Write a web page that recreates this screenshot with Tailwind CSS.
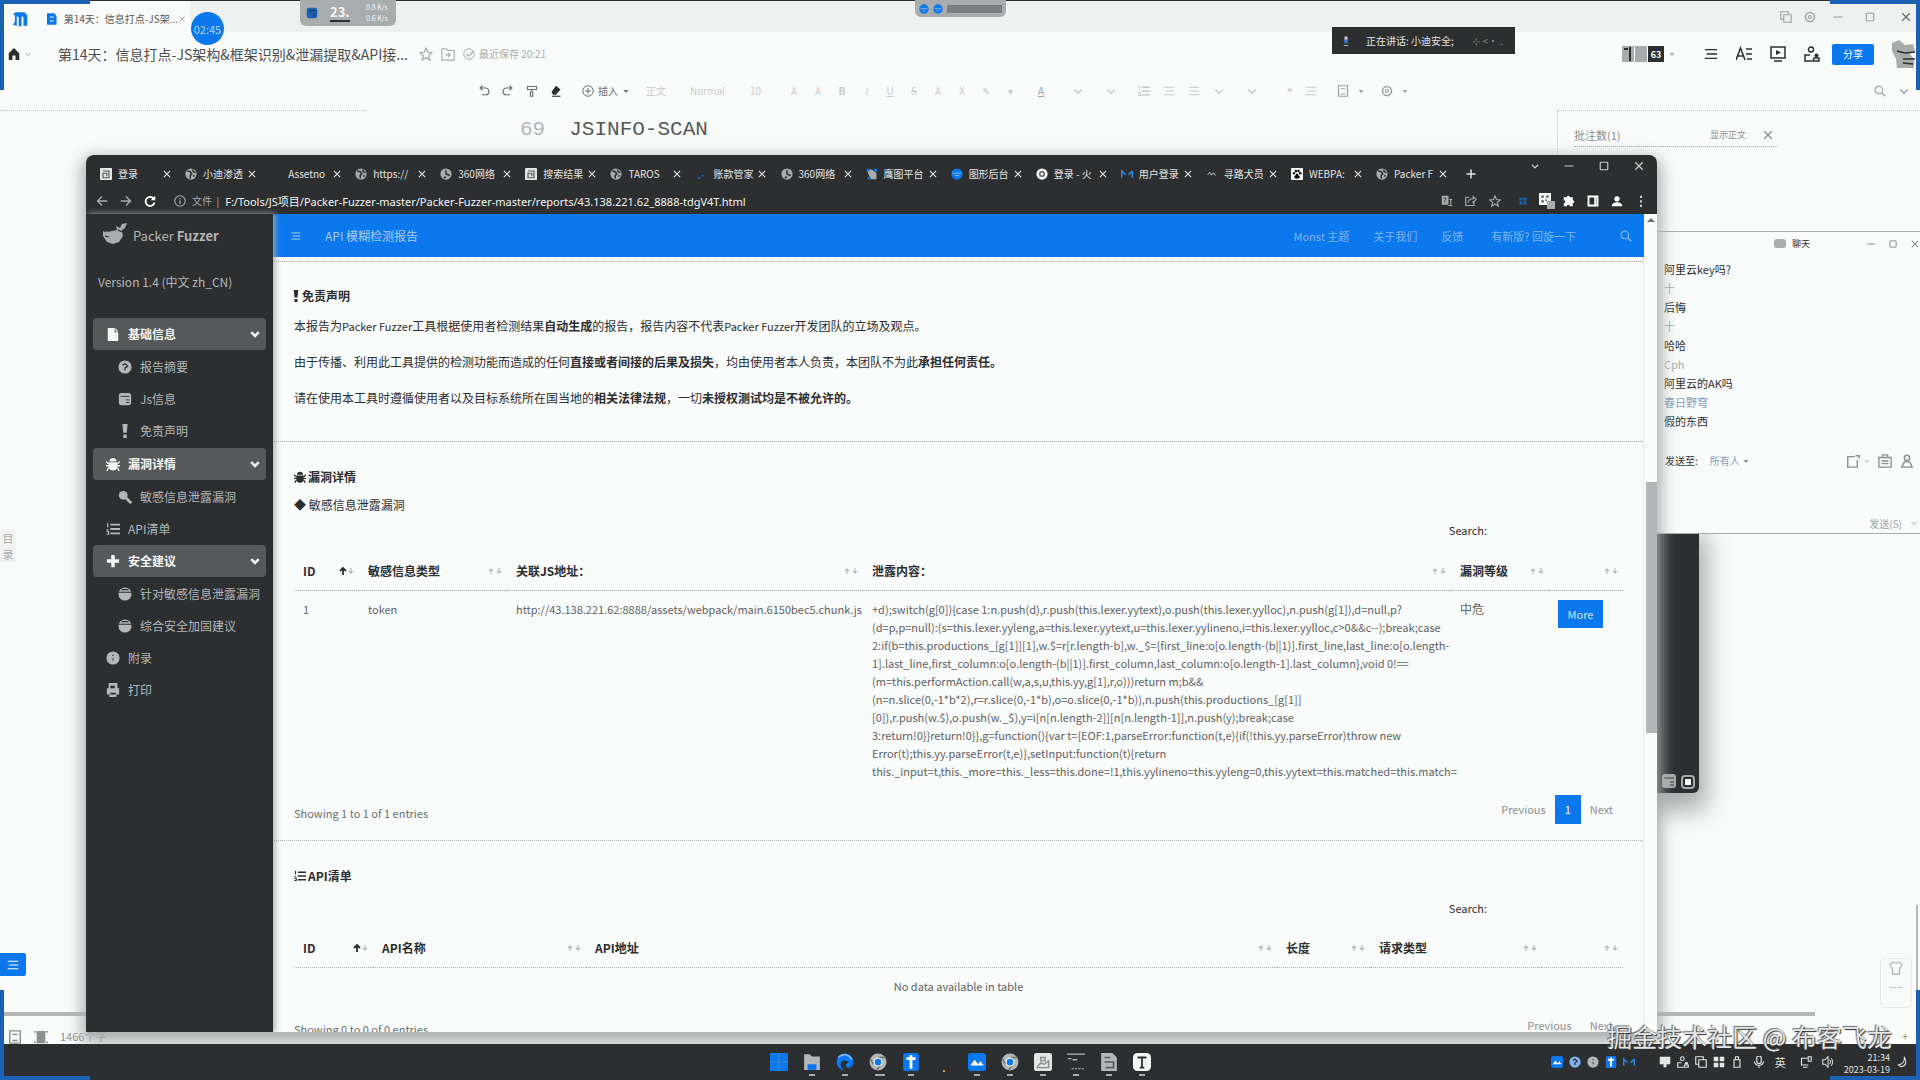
<!DOCTYPE html>
<html lang="zh-CN">
<head>
  <meta charset="UTF-8" />
  <meta name="viewport" content="width=device-width, initial-scale=1.0"/>
  <title>Packer Fuzzer 报告</title>
  <script src="https://cdn.jsdelivr.net/npm/@tailwindcss/browser@4"></script>
</head>
<body class="h-screen overflow-hidden bg-[#fafbfb] font-['Noto_Sans_CJK_SC',sans-serif] text-xs leading-[18px] text-[#2c2e2f]">

  <!-- Icon sprite -->
  <svg class="hidden">
    <symbol id="x" viewBox="0 0 16 16"><path d="M3 3l10 10M13 3L3 13" fill="none" stroke="currentColor" stroke-width="1.8"/></symbol>
    <symbol id="min" viewBox="0 0 16 16"><path d="M2 8h12" stroke="currentColor" stroke-width="1.6"/></symbol>
    <symbol id="max" viewBox="0 0 16 16"><rect x="3" y="3" width="10" height="10" rx="1" fill="none" stroke="currentColor" stroke-width="1.6"/></symbol>
    <symbol id="down" viewBox="0 0 16 16"><path d="M3 6l5 5 5-5" fill="none" stroke="currentColor" stroke-width="2"/></symbol>
    <symbol id="caret" viewBox="0 0 16 16"><path d="M3 6h10l-5 6z" fill="currentColor"/></symbol>
    <symbol id="chev" viewBox="0 0 16 16"><path d="M2 5l6 6 6-6" fill="none" stroke="currentColor" stroke-width="4"/></symbol>
    <symbol id="plus" viewBox="0 0 16 16"><path d="M8 2v12M2 8h12" stroke="currentColor" stroke-width="2"/></symbol>
    <symbol id="plusbold" viewBox="0 0 16 16"><path d="M8 1v14M1 8h14" stroke="currentColor" stroke-width="4"/></symbol>
    <symbol id="home" viewBox="0 0 16 16"><path d="M8 0L1 7v9h5v-6h4v6h5V7z" fill="currentColor"/></symbol>
    <symbol id="globe" viewBox="0 0 16 16"><circle cx="8" cy="8" r="7.5" fill="#a9acac"/><path d="M3 4l4 1 2 3-2 2v4M10 2l1 3 3 1M11 10l2 1" fill="none" stroke="#2c2e2f" stroke-width="2"/></symbol>
    <symbol id="clock" viewBox="0 0 16 16"><circle cx="8" cy="8" r="7.5" fill="#a9acac"/><path d="M8 3v5l5 2M8 12l-3 1" fill="none" stroke="#2c2e2f" stroke-width="2"/></symbol>
    <symbol id="paw" viewBox="0 0 16 16"><rect width="16" height="16" rx="1" fill="#f4f5f5"/><circle cx="4" cy="7" r="1.6"/><circle cx="6.5" cy="4" r="1.6"/><circle cx="10" cy="4" r="1.6"/><circle cx="12.5" cy="7" r="1.6"/><path d="M8 7l4 5-2 2H6l-2-2z"/></symbol>
    <symbol id="tile" viewBox="0 0 16 16"><rect width="16" height="16" rx="1" fill="#e4e5e5"/><path d="M4 4h8v9H4V7h5v4" fill="none" stroke="#55595a" stroke-width="1.6"/></symbol>
    <symbol id="ring" viewBox="0 0 16 16"><circle cx="8" cy="8" r="7.5" fill="#f4f5f5"/><circle cx="8" cy="8" r="3" fill="none" stroke="#55595a" stroke-width="1.8"/></symbol>
    <symbol id="gear" viewBox="0 0 16 16"><circle cx="8" cy="8" r="6" fill="none" stroke="currentColor" stroke-width="2"/><circle cx="8" cy="8" r="2" fill="none" stroke="currentColor" stroke-width="1.6"/></symbol>
    <symbol id="eagle" viewBox="0 0 16 16"><path d="M1 2h7l6 5v8H7l-3-5z" fill="#a9acac"/><path d="M1 1h4v3H1zM11 1h4v4h-4zM2 12h4v3H2z" fill="#0b78ee"/></symbol>
    <symbol id="orb" viewBox="0 0 16 16"><circle cx="8" cy="8" r="7.5" fill="#0b78ee"/><path d="M2 7h12M5 10h6" stroke="#7fb3ea" stroke-width="1.5"/></symbol>
    <symbol id="zig" viewBox="0 0 16 16"><path d="M1 13V4l5 5M15 4v9M10 9l5-5" fill="none" stroke="#2f86e6" stroke-width="2"/></symbol>
    <symbol id="tick3" viewBox="0 0 16 16"><path d="M2 9l3-3 2 3 3-2 3 3" fill="none" stroke="#a9acac" stroke-width="1.4"/></symbol>
    <symbol id="spark" viewBox="0 0 16 16"><path d="M4 12h3v2H4zM9 9h2v2H9z" fill="#0b78ee"/></symbol>
    <symbol id="back" viewBox="0 0 16 16"><path d="M15 8H2M8 2L2 8l6 6" fill="none" stroke="currentColor" stroke-width="1.8"/></symbol>
    <symbol id="fwd" viewBox="0 0 16 16"><path d="M1 8h13M8 2l6 6-6 6" fill="none" stroke="currentColor" stroke-width="1.8"/></symbol>
    <symbol id="reload" viewBox="0 0 16 16"><path d="M13 5a6 6 0 1 0 1 5" fill="none" stroke="currentColor" stroke-width="2.4"/><path d="M15 1v6H9z" fill="currentColor"/></symbol>
    <symbol id="info" viewBox="0 0 16 16"><circle cx="8" cy="8" r="7" fill="none" stroke="currentColor" stroke-width="1.5"/><path d="M8 7v5M8 4v1.5" stroke="currentColor" stroke-width="1.8"/></symbol>
    <symbol id="star" viewBox="0 0 16 16"><path d="M8 1l2 5 5 .5-4 3.5 1.5 5L8 12l-4.500 3L5 10 1 6.500 6 6z" fill="none" stroke="currentColor" stroke-width="1.4"/></symbol>
    <symbol id="folder" viewBox="0 0 16 16"><path d="M1 2h5l2 2h7v11H1zM5 9h5M8 6.500L10.500 9 8 11.500" fill="none" stroke="currentColor" stroke-width="1.3"/></symbol>
    <symbol id="check" viewBox="0 0 16 16"><circle cx="8" cy="8" r="7" fill="none" stroke="currentColor" stroke-width="1.3"/><path d="M4.500 8l3 3L14 4" fill="none" stroke="currentColor" stroke-width="1.5"/></symbol>
    <symbol id="undo" viewBox="0 0 16 16"><path d="M3 4h7a4 4 0 0 1 0 9H5M6 1L3 4l3 3" fill="none" stroke="currentColor" stroke-width="1.6"/></symbol>
    <symbol id="redo" viewBox="0 0 16 16"><path d="M13 4H6a4 4 0 0 0 0 9h5M10 1l3 3-3 3" fill="none" stroke="currentColor" stroke-width="1.6"/></symbol>
    <symbol id="brush" viewBox="0 0 16 16"><path d="M2 2h12v4H2zM8 6v3H6v6h3V9" fill="none" stroke="currentColor" stroke-width="1.5"/></symbol>
    <symbol id="eraser" viewBox="0 0 16 16"><path d="M8 1l6 5-6 7H4l-2-4z" fill="currentColor"/><path d="M3 15h11" stroke="currentColor" stroke-width="1.5"/></symbol>
    <symbol id="addc" viewBox="0 0 16 16"><circle cx="8" cy="8" r="7" fill="none" stroke="currentColor" stroke-width="1.3"/><path d="M8 4v8M4 8h8" stroke="currentColor" stroke-width="1.3"/></symbol>
    <symbol id="lines" viewBox="0 0 16 16"><path d="M1 3h14M3 8h12M1 13h14" stroke="currentColor" stroke-width="1.6"/></symbol>
    <symbol id="ol" viewBox="0 0 16 16"><path d="M5 3h11M5 8h11M5 13h11" stroke="currentColor" stroke-width="2.2"/><path d="M2 1v5M.5 9h2.500M.5 14h2.500v-3H.5" stroke="currentColor" fill="none" stroke-width="1.4"/></symbol>
    <symbol id="box" viewBox="0 0 16 16"><path d="M2 1h12v14H2zM5 5h6M5 12h6" fill="none" stroke="currentColor" stroke-width="1.6"/></symbol>
    <symbol id="clip" viewBox="0 0 16 16"><path d="M1 4h14v11H1zM5 4V1h6v3M4 8h8M4 11h8" fill="none" stroke="currentColor" stroke-width="1.5"/></symbol>
    <symbol id="shot" viewBox="0 0 16 16"><path d="M10 3H2v12h11V7M11 2h4v3" fill="none" stroke="currentColor" stroke-width="1.6"/></symbol>
    <symbol id="user" viewBox="0 0 16 16"><circle cx="8" cy="4.500" r="3" fill="none" stroke="currentColor" stroke-width="1.6"/><path d="M2 15l3-6h6l3 6z" fill="none" stroke="currentColor" stroke-width="1.6"/></symbol>
    <symbol id="magnify" viewBox="0 0 16 16"><circle cx="6.500" cy="6.500" r="5" fill="none" stroke="currentColor" stroke-width="1.6"/><path d="M10 10l5 5" stroke="currentColor" stroke-width="2"/></symbol>
    <symbol id="aa" viewBox="0 0 16 16"><path d="M0 14L4.500 2 9 14M2 10h5M10 3h6M10 8h6M11 13h5" fill="none" stroke="currentColor" stroke-width="1.5"/></symbol>
    <symbol id="play" viewBox="0 0 16 16"><path d="M1 1h14v11H1zM4 15h8" fill="none" stroke="currentColor" stroke-width="1.5"/><path d="M6 4l5 2.500L6 9z" fill="currentColor"/></symbol>
    <symbol id="people" viewBox="0 0 16 16"><circle cx="7" cy="3.500" r="2.500" fill="none" stroke="currentColor" stroke-width="1.4"/><path d="M6 9H1v6h7M9 15h6v-3h-5z" fill="none" stroke="currentColor" stroke-width="1.5"/><circle cx="12.500" cy="9.500" r="2" fill="currentColor"/></symbol>
    <symbol id="avatar" viewBox="0 0 24 28"><path d="M1 3l7-3 6 5 8-1 2 7-5 3 4 5v9H10L6 28l-1-9-4-8z" fill="#a9acac"/><path d="M6 11l8 2 10-1M12 19h12M12 23l10 1" stroke="#2c2e2f" stroke-width="1.5" fill="none"/></symbol>
    <symbol id="translate" viewBox="0 0 16 16"><rect x="1" y="1" width="9" height="12" fill="currentColor"/><path d="M11 6h4M13 6v8M10 14h5" stroke="currentColor" stroke-width="1.5"/><path d="M3 4h4l-3 6" stroke="#2c2e2f" fill="none"/></symbol>
    <symbol id="share" viewBox="0 0 16 16"><path d="M6 3H1v11h11v-4M4 10c1-4 4-5 7-5V2l4 4-4 4V8" fill="none" stroke="currentColor" stroke-width="1.5"/></symbol>
    <symbol id="puzzle" viewBox="0 0 16 16"><path d="M1 3h4a2 2 0 1 1 4 0h4v4a2 2 0 1 1 0 4v4H9a2 2 0 0 0-4 0H1v-4a2 2 0 0 0 0-4z" fill="currentColor"/></symbol>
    <symbol id="side" viewBox="0 0 16 16"><path d="M2 2h12v12H2zM11 2v12" fill="none" stroke="currentColor" stroke-width="2.5"/></symbol>
    <symbol id="person" viewBox="0 0 16 16"><circle cx="8" cy="5" r="3.500" fill="currentColor"/><path d="M1 15c0-7 14-7 14 0z" fill="currentColor"/></symbol>
    <symbol id="dots" viewBox="0 0 16 16"><path d="M7 1h2v3H7zM7 7h2v3H7zM7 13h2v3H7z" fill="currentColor"/></symbol>
    <symbol id="qr" viewBox="0 0 20 20"><path d="M0 0h15v15H0z" fill="#f4f5f5"/><path d="M3 3h3v3H3zM9 3h3v3H9zM3 9h3v3H3zM8 8h2v2H8z" fill="#55595a"/><path d="M10 10h10v10H10z" fill="#a9acac"/></symbol>
    <symbol id="file" viewBox="0 0 16 16"><path d="M2 1h8v5h4v10H2z" fill="currentColor"/><path d="M11 1l3 4h-3z" fill="currentColor"/></symbol>
    <symbol id="shield" viewBox="0 0 16 16"><circle cx="8" cy="8" r="7.5" fill="currentColor"/><path d="M5 6l3-2 3 3-3 2v3" fill="none" stroke="#2c2e2f" stroke-width="1.5"/></symbol>
    <symbol id="db" viewBox="0 0 16 16"><rect x="1" y="1" width="14" height="14" rx="3" fill="currentColor"/><path d="M3 5h10M9 9h4M9 12h4" stroke="#2c2e2f"/></symbol>
    <symbol id="excl" viewBox="0 0 16 16"><path d="M5 0h6l-1 10H6zM6 12h4v4H6z" fill="currentColor"/></symbol>
    <symbol id="bug" viewBox="0 0 16 16"><path d="M4 5a4 4 0 0 1 8 0z" fill="currentColor"/><path d="M3 6h10v5a5 4.500 0 0 1-10 0z" fill="currentColor"/><path d="M3 8L0 5M13 8l3-3M0 10h16M3 12l-2 4M13 12l2 4" stroke="currentColor" stroke-width="1.6"/></symbol>
    <symbol id="ball" viewBox="0 0 16 16"><circle cx="8" cy="8" r="7.5" fill="currentColor"/><path d="M1 6h14M4 3h8" stroke="#2c2e2f" stroke-width="1.2"/></symbol>
    <symbol id="key" viewBox="0 0 16 16"><circle cx="6" cy="6" r="5" fill="currentColor"/><path d="M8 8l7 7" stroke="currentColor" stroke-width="3.2"/></symbol>
    <symbol id="disc" viewBox="0 0 16 16"><circle cx="8" cy="8" r="7.5" fill="currentColor"/><path d="M7 5h2M8 8v3" stroke="#2c2e2f"/></symbol>
    <symbol id="print" viewBox="0 0 16 16"><path d="M3 0h10v6h2v7h-3v3H4v-3H1V6h2z" fill="currentColor"/><path d="M5 3h5v3H5zM5 11h6v2H5z" fill="#2c2e2f"/></symbol>
    <symbol id="sort" viewBox="0 0 16 10"><path d="M4 8V3M2 5l2-2 2 2M12 2v5M10 5l2 2 2-2" fill="none" stroke="#b4b7b7" stroke-width="1.1"/></symbol>
    <symbol id="sortup" viewBox="0 0 16 10"><path d="M4 9V2M1 5l3-3 3 3" fill="none" stroke="#2c2e2f" stroke-width="1.8"/><path d="M12 2v5M10 5l2 2 2-2" fill="none" stroke="#b4b7b7" stroke-width="1.1"/></symbol>
    <symbol id="chrome" viewBox="0 0 16 16"><circle cx="8" cy="8" r="7.5" fill="#b4b7b7"/><path d="M8 4h7M4 10L1 5M10 11l-3 4" stroke="#6b6f70" stroke-width="1.2"/><circle cx="8" cy="8" r="3.500" fill="#0b78ee" stroke="#f4f5f5"/></symbol>
    <symbol id="edge" viewBox="0 0 16 16"><circle cx="8" cy="8" r="7.5" fill="#0b78ee"/><path d="M5 13c-3-6 3-8 6-5 0 2-3 1-2 4 1 2 4 1 5 0l-2 4H8z" fill="#2c2e2f"/><path d="M2 4c4-4 10-3 12 2" stroke="#7fb3ea" fill="none" stroke-width="1.5"/></symbol>
    <symbol id="explorer" viewBox="0 0 16 16"><path d="M1 1h5l2 2h7v12H1z" fill="#b4b7b7"/><path d="M4 10h8v5H4z" fill="#0b78ee"/></symbol>
    <symbol id="tdoc" viewBox="0 0 16 16"><rect x="1" width="14" height="16" rx="2" fill="#0b78ee"/><path d="M4 5h8M8 2v12" stroke="#fff" stroke-width="2.500"/></symbol>
    <symbol id="wave" viewBox="0 0 16 16"><rect width="16" height="16" rx="3" fill="#0b78ee"/><path d="M2 11l4-5 3 4 2-3 3 4z" fill="#fff"/></symbol>
    <symbol id="note" viewBox="0 0 16 16"><rect width="16" height="16" rx="2" fill="#e4e5e5"/><path d="M3 12l3-3 3 1 4-3v6H3zM6 4h4v3H6z" stroke="#8b8f8f" fill="none" stroke-width="1.3"/></symbol>
    <symbol id="term" viewBox="0 0 16 16"><path d="M0 1h16M1 5h3M5 6h4" stroke="#b4b7b7" stroke-width="1.2"/><path d="M4 14h12" stroke="#b4b7b7" stroke-dasharray="2 1"/></symbol>
    <symbol id="paper" viewBox="0 0 16 16"><path d="M1 0h10l4 4v12H1z" fill="#b4b7b7"/><path d="M4 4h5M4 8h8v5H5" stroke="#55595a" fill="none" stroke-width="1.5"/></symbol>
    <symbol id="tapp" viewBox="0 0 16 16"><rect width="16" height="16" rx="4" fill="#f4f5f5"/><path d="M4 4h8M8 4v9M6 13h4" stroke="#2c2e2f" stroke-width="1.6"/></symbol>
    <symbol id="mic" viewBox="0 0 16 16"><rect x="5" y="0" width="6" height="10" rx="3" fill="none" stroke="currentColor" stroke-width="1.6"/><path d="M2 7c0 7 12 7 12 0M8 12v4" fill="none" stroke="currentColor" stroke-width="1.4"/></symbol>
    <symbol id="micon" viewBox="0 0 16 16"><path d="M6 2h4v5H6z" fill="#c8caca"/><path d="M6 6h4v5H6z" fill="#2f86e6"/><path d="M5 14h6" stroke="#a9acac" stroke-width="1.5"/></symbol>
    <symbol id="spk" viewBox="0 0 16 16"><path d="M1 5h3l4-4v14l-4-4H1zM10 5c2 2 2 4 0 6M12 3c3 3 3 7 0 10" fill="none" stroke="currentColor" stroke-width="1.4"/></symbol>
    <symbol id="mon" viewBox="0 0 16 16"><path d="M1 1h14v10H1zM6 11h4v4H6z" fill="currentColor"/></symbol>
    <symbol id="net" viewBox="0 0 16 16"><path d="M11 12H2V3h8M11 1h4v6h-4zM4 15h6" fill="none" stroke="currentColor" stroke-width="1.500"/></symbol>
    <symbol id="win" viewBox="0 0 16 16"><path d="M1 1h6v6H1zM9 1h6v6H9zM1 9h6v6H1zM9 9h6v6H9z" fill="currentColor"/></symbol>
    <symbol id="winlogo" viewBox="0 0 16 16"><path d="M0 0h16v16H0z" fill="#0b78ee"/><path d="M8 0v16M0 8h16" stroke="#3f86cf" stroke-width="1"/></symbol>
    <symbol id="bricks" viewBox="0 0 16 16"><path d="M3 1h10v14H3zM0 1h2v2H0zM14 1h2v2h-2zM0 13h2v2H0zM14 13h2v2h-2z" fill="currentColor"/></symbol>
    <symbol id="copy" viewBox="0 0 16 16"><path d="M5 5h10v10H5zM5 11H1V1h10v4" fill="none" stroke="currentColor" stroke-width="1.5"/></symbol>
    <symbol id="usb" viewBox="0 0 16 16"><path d="M6 1h4v4H6zM4 5h8v10H4z" fill="none" stroke="currentColor" stroke-width="1.5"/></symbol>
    <symbol id="moon" viewBox="0 0 16 16"><path d="M11 1c1 6-2 10-8 11 4 4 10 2 10-4 0-3-1-5-2-7z" fill="none" stroke="currentColor" stroke-width="1.4"/></symbol>
    <symbol id="shirt" viewBox="0 0 16 16"><path d="M5 1L1 4l2 4h1v7h8V8h1l2-4-4-3c-1 2-5 2-6 0z" fill="none" stroke="currentColor" stroke-width="1.2"/></symbol>
    <symbol id="dog" viewBox="0 0 26 22"><path d="M2 8c3 2 6 2 9 1l5-1 5 1 1 5-4 6-6 2-6-2-4-6z" fill="#a9acac"/><path d="M15 4l4 2 2-4 5-1-2 5-4 3-4-1z" fill="#a9acac"/><path d="M0 7l5 3M4 14l4 1M17 8l4 2" stroke="#2c2e2f" stroke-width="1.200"/></symbol>
  </svg>

  <div class="flex h-full flex-col">
    <main class="relative flex min-h-0 flex-1 flex-col">

      <!-- Document app: title bar -->
      <div class="flex h-8 shrink-0 items-center border-t border-[#2c2e2f] bg-[#eff0f0] text-[#a0a3a3]">
        <div class="flex h-full w-[190px] items-center bg-[#fafbfb] pl-3 pt-1">
          <svg class="mr-[18px] h-4 w-[17px]" viewBox="0 0 17 16"><path d="M1 3l3-2h9l3 3v11h-4V6l-2-1v10l-3 1V6L5 5v10l-4-1 2-3V4z" fill="#0b78ee"/></svg>
          <svg class="mr-1.5 size-3" viewBox="0 0 12 12"><path d="M1 0h8l2 3v9H1z" fill="#0b78ee"/><path d="M4 4h4M4 8h4" stroke="#fff"/></svg>
          <span class="flex-1 whitespace-nowrap text-[10px] text-[#55595a]">第14天：信息打点-JS架...</span>
          <button class="mr-1" aria-label="关闭标签"><svg class="size-2"><use href="#x"/></svg></button>
        </div>
        <div class="ml-auto flex items-center gap-3 pr-2">
          <svg class="size-3"><use href="#copy"/></svg>
          <svg class="size-3"><use href="#gear"/></svg>
          <button aria-label="最小化" class="ml-1"><svg class="size-3"><use href="#min"/></svg></button>
          <button aria-label="最大化" class="ml-2"><svg class="size-3"><use href="#max"/></svg></button>
          <button aria-label="关闭" class="ml-3 text-[#6b6f70]"><svg class="size-3"><use href="#x"/></svg></button>
        </div>
      </div>

      <!-- Document name and actions -->
      <div class="flex h-11 shrink-0 items-center pl-2">
        <svg class="size-3"><use href="#home"/></svg>
        <svg class="ml-1 size-2 text-[#a9acac]"><use href="#down"/></svg>
        <h1 class="ml-[26px] w-[345px] whitespace-nowrap text-sm text-[#4b4e4f]">第14天：信息打点-JS架构&amp;框架识别&amp;泄漏提取&amp;API接...</h1>
        <div class="ml-4 flex items-center gap-2 text-[10px] text-[#a9acac]">
          <svg class="size-3.5"><use href="#star"/></svg>
          <svg class="size-3.5"><use href="#folder"/></svg>
          <svg class="size-3"><use href="#check"/></svg>
          <span class="-ml-1">最近保存 20:21</span>
        </div>
        <div class="ml-auto flex items-center">
          <div class="flex h-4 items-center gap-px text-[9px] font-bold leading-none text-white">
            <svg class="size-3 h-4" viewBox="0 0 12 16"><path d="M0 0h12v16H0z" fill="#a9acac"/><path d="M8 1v14M2 3h4" stroke="#2c2e2f" stroke-width="2"/></svg>
            <span class="h-full w-3 bg-[#a9acac]"></span>
            <span class="flex h-full w-4 items-center justify-center bg-[#2c2e2f]">63</span>
          </div>
          <svg class="ml-1 size-2 text-[#a9acac]"><use href="#caret"/></svg>
          <div class="ml-7 flex items-center gap-[18px]">
            <svg class="size-3.5"><use href="#lines"/></svg>
            <svg class="size-4"><use href="#aa"/></svg>
            <svg class="size-4"><use href="#play"/></svg>
            <svg class="size-4"><use href="#people"/></svg>
          </div>
          <button class="ml-3 h-[21px] w-[42px] rounded-xs bg-[#0b78ee] text-[10px] leading-none text-white">分享</button>
          <svg class="ml-4 mr-1 h-7 w-[26px]"><use href="#avatar"/></svg>
        </div>
      </div>

      <!-- Formatting toolbar -->
      <div class="flex h-[34px] shrink-0 items-center pb-1 pl-[478px] pr-[10px] text-[10px] text-[#c8caca]">
        <div class="flex items-center gap-3 text-[#6b6f70]">
          <svg class="size-3"><use href="#undo"/></svg>
          <svg class="size-3"><use href="#redo"/></svg>
          <svg class="size-3"><use href="#brush"/></svg>
          <svg class="size-3 text-[#2c2e2f]"><use href="#eraser"/></svg>
          <div class="ml-2 flex items-center"><svg class="mr-1 size-3"><use href="#addc"/></svg>插入<svg class="ml-1 size-2"><use href="#caret"/></svg></div>
        </div>
        <span class="ml-4">正文</span>
        <span class="ml-6 w-10">Normal</span>
        <span class="ml-5 w-8">10</span>
        <div class="grid grid-cols-[repeat(10,24px)] justify-items-center">
          <span>A</span><span>A</span><b>B</b><i>I</i><u>U</u><s>S</s><span>A</span><span>X</span><span>✎</span><span>▾</span>
        </div>
        <u class="ml-4 text-[#a0a3a3]">A</u>
        <div class="ml-7 flex items-center gap-[13px]">
          <svg class="mr-2 size-3"><use href="#down"/></svg>
          <svg class="mr-2 size-3"><use href="#down"/></svg>
          <svg class="size-3"><use href="#ol"/></svg>
          <svg class="size-3"><use href="#lines"/></svg>
          <svg class="size-3"><use href="#lines"/></svg>
          <svg class="mr-2 size-3"><use href="#down"/></svg>
          <svg class="mr-4 size-3"><use href="#down"/></svg>
          <span>❝</span>
          <svg class="size-3"><use href="#lines"/></svg>
        </div>
        <div class="ml-5 flex items-center gap-2 text-[#a0a3a3]">
          <svg class="size-3"><use href="#box"/></svg><svg class="size-2"><use href="#caret"/></svg>
          <svg class="ml-2 size-3"><use href="#gear"/></svg><svg class="size-2"><use href="#caret"/></svg>
        </div>
        <div class="ml-auto flex gap-3 text-[#a0a3a3]">
          <svg class="size-3"><use href="#magnify"/></svg>
          <svg class="size-3"><use href="#down"/></svg>
        </div>
      </div>

      <!-- Document body -->
      <div class="flex min-h-0 flex-1 items-start">
        <div class="h-8 w-[366px] border-t border-dotted border-[#c0c2c2]"></div>
        <p class="pl-[154px] pt-1 font-['Liberation_Mono',monospace] text-[21px] leading-8 text-[#55595a]"><span class="mr-6 text-[#b4b7b7]">69</span>JSINFO-SCAN</p>
        <aside class="ml-auto h-20 w-[363px] border-l border-t border-dotted border-[#c0c2c2] pl-4 text-[11px] text-[#8b8f8f]">
          <div class="flex h-9 w-[204px] items-center border-b border-dotted border-[#a9acac] pb-1 pt-4">
            <span>批注数(1)</span>
            <span class="ml-auto text-[9px]">显示正文</span>
            <button aria-label="关闭批注" class="ml-4 mr-1"><svg class="size-3"><use href="#x"/></svg></button>
          </div>
        </aside>
      </div>

      <!-- Document status bar -->
      <div class="mr-[105px] h-1 shrink-0 bg-[#b4b7b7]"></div>
      <div class="flex h-7 shrink-0 items-end gap-3 pl-2 text-[11px] leading-4 text-[#8b8f8f]">
        <svg class="size-3.5"><use href="#box"/></svg>
        <svg class="size-3.5"><use href="#bricks"/></svg>
        <span>1466个字</span>
        <span class="ml-auto pr-3">+</span>
      </div>

      <!-- Left dock -->
      <div class="absolute left-0 top-[530px] w-4 bg-[#f1f2f2] text-center text-[11px] leading-4 text-[#a9acac]">目录</div>
      <button aria-label="大纲" class="absolute bottom-[68px] left-0 flex h-[23px] w-[26px] items-center justify-center rounded-r-xs bg-[#0b78ee] text-white"><svg class="size-3"><use href="#lines"/></svg></button>

      <!-- Right dock -->
      <div class="absolute bottom-9 right-2 flex h-[50px] w-8 flex-col items-center gap-3 rounded border border-dotted border-[#d4d6d6] pt-0.5 text-[#a9acac]">
        <svg class="size-3.5"><use href="#shirt"/></svg>
        <span class="w-3 border-t border-dotted border-[#a9acac]"></span>
      </div>
      <div class="absolute bottom-[54px] right-0.5 h-[85px] w-0.5 bg-[#b4b7b7]"></div>

      <!-- Recorder bubbles -->
      <div class="absolute left-[191px] top-3 flex size-[33px] items-center justify-center rounded-full bg-[#0b78ee] text-[11px] text-[#b9d6f5]">02:45</div>
      <div class="absolute left-[300px] top-0 flex h-[26px] w-24 items-center rounded-b-md bg-[#a9acac] pl-1.5 text-[#f4f5f5]">
        <svg class="size-3 text-[#1b62b5]"><use href="#db"/></svg>
        <div class="ml-3 w-8 text-[13px] font-bold leading-4">23.<div class="h-0.5 w-5 bg-[#2c2e2f]"></div></div>
        <div class="whitespace-nowrap pl-1 text-[7px] leading-[11px]">0.8 K/s<br>0.6 K/s</div>
      </div>
      <div class="absolute left-[915px] top-0 flex h-[17px] w-[91px] items-center gap-1 rounded-b-md bg-[#a9acac] p-1 text-[#1b62b5]"><svg class="size-2.5"><use href="#orb"/></svg><svg class="size-2.5"><use href="#orb"/></svg><span class="h-2 flex-1 bg-[#7b7f80]"></span></div>
      <div class="absolute right-[405px] top-[27px] flex h-[27px] w-[183px] items-center bg-[#2c2e2f] pl-2 text-[10px] text-[#e4e5e5]">
        <svg class="size-3"><use href="#micon"/></svg>
        <span class="ml-[14px]">正在讲话: 小迪安全;</span>
        <span class="ml-auto pr-3 text-[#8b8f8f]">⊹ &lt;· .</span>
      </div>

      <!-- Dark window behind the chat -->
      <div class="absolute bottom-[251px] right-[221px] flex h-[264px] w-16 items-end justify-end gap-1 rounded-br-md bg-[#2c2e2f] p-1 shadow-[2px_12px_24px_6px_#a9acac]">
        <svg class="size-4 text-[#a9acac]"><use href="#db"/></svg>
        <span class="size-3.5 rounded-sm border-2 border-[#a9acac] bg-[#2c2e2f] p-0.5"><span class="block size-full bg-white"></span></span>
      </div>

      <!-- Chat window -->
      <section class="absolute right-0 top-[231px] h-[303px] w-[263px] border-y border-[#a9acac] bg-[#fafbfb] text-[11px]">
        <div class="flex h-6 items-center">
          <svg class="ml-[117px] mr-1.5 h-2.5 w-3" viewBox="0 0 12 10"><rect width="12" height="9" rx="3" fill="#a9acac"/></svg>
          <span class="text-[9px]">聊天</span>
          <div class="ml-auto flex gap-3 text-[#8b8f8f]">
            <button aria-label="最小化聊天"><svg class="size-2.5"><use href="#min"/></svg></button>
            <button aria-label="最大化聊天"><svg class="size-2.5"><use href="#max"/></svg></button>
            <button aria-label="关闭聊天"><svg class="size-2.5"><use href="#x"/></svg></button>
          </div>
        </div>
        <div class="flex flex-col gap-px pl-[7px] pt-1 leading-[18px]">
          <p>阿里云key吗?</p>
          <p class="text-[#a9acac]">十</p>
          <p>后悔</p>
          <p class="text-[#a9acac]">十</p>
          <p>哈哈</p>
          <p class="text-[#a9acac]">Cph</p>
          <p>阿里云的AK吗</p>
          <p class="text-[#7f9cbb]">春日野穹</p>
          <p>假的东西</p>
        </div>
        <div class="flex items-center pl-2 pt-[22px] text-[10px]">
          <label for="to">发送至:</label>
          <select id="to" class="ml-3 w-8 appearance-none text-[#7f9cbb]"><option>所有人</option></select>
          <svg class="size-2 text-[#8b8f8f]"><use href="#caret"/></svg>
          <div class="ml-auto flex items-center gap-1 pr-1.5 text-[#8b8f8f]">
            <svg class="size-3.5"><use href="#shot"/></svg><svg class="mr-1 size-1.5"><use href="#down"/></svg>
            <svg class="size-3.5"><use href="#clip"/></svg>
            <svg class="ml-1 size-3.5"><use href="#user"/></svg>
          </div>
        </div>
        <button class="absolute bottom-0 right-[18px] text-[10px] text-[#a0a3a3]">发送(S)</button>
        <svg class="absolute bottom-1.5 right-0.5 size-2 text-[#a9acac]"><use href="#down"/></svg>
      </section>

      <!-- Browser window -->
      <section class="absolute bottom-3 left-[86px] right-[263px] top-[155px] flex flex-col overflow-hidden rounded-t-lg bg-[#2c2e2f] shadow-[0_6px_16px_4px_#a9acac]">

        <!-- Tabs -->
        <div class="flex h-[35px] shrink-0 items-center pl-3 pt-0.5 text-[10px] text-[#e4e5e5]">
          <div id="tabs" class="grid flex-1 grid-cols-[repeat(16,minmax(0,1fr))]"></div>
          <button aria-label="新标签页" class="ml-1.5"><svg class="size-3"><use href="#plus"/></svg></button>
          <div class="-mt-4 ml-[53px] flex gap-[23px] pr-3 text-[#c8caca]">
            <button aria-label="标签列表"><svg class="size-2.5"><use href="#down"/></svg></button>
            <button aria-label="最小化窗口"><svg class="size-3"><use href="#min"/></svg></button>
            <button aria-label="最大化窗口"><svg class="size-3"><use href="#max"/></svg></button>
            <button aria-label="关闭窗口"><svg class="size-3"><use href="#x"/></svg></button>
          </div>
        </div>

        <!-- Address bar -->
        <div class="flex h-6 shrink-0 items-center px-2.5 pb-0.5 text-[#a9acac]">
          <button aria-label="后退"><svg class="size-3"><use href="#back"/></svg></button>
          <button aria-label="前进" class="ml-3"><svg class="size-3"><use href="#fwd"/></svg></button>
          <button aria-label="刷新" class="ml-3 text-white"><svg class="size-3"><use href="#reload"/></svg></button>
          <svg class="ml-[18px] size-3"><use href="#info"/></svg>
          <label for="url" class="ml-1.5 text-[10px]">文件&nbsp; |</label>
          <input id="url" type="text" value="F:/Tools/JS项目/Packer-Fuzzer-master/Packer-Fuzzer-master/reports/43.138.221.62_8888-tdgV4T.html" class="ml-1.5 h-5 min-w-0 flex-1 bg-transparent text-[11px] text-[#f4f5f5] outline-none font-['Noto_Sans','Noto_Sans_CJK_SC',sans-serif]" />
          <div class="flex items-center gap-3">
            <svg class="size-3"><use href="#translate"/></svg>
            <svg class="size-3"><use href="#share"/></svg>
            <svg class="size-3"><use href="#star"/></svg>
            <svg class="ml-1.5 size-2 text-[#1b62b5]"><use href="#win"/></svg>
            <svg class="size-4"><use href="#qr"/></svg>
            <svg class="-ml-1 size-3 text-white"><use href="#puzzle"/></svg>
            <svg class="size-3 text-white"><use href="#side"/></svg>
            <svg class="size-3 text-white"><use href="#person"/></svg>
            <svg class="size-3 text-white"><use href="#dots"/></svg>
          </div>
        </div>

        <div class="flex min-h-0 flex-1">
          <!-- Report sidebar -->
          <nav class="z-10 w-[187px] shrink-0 px-[7px] text-[#b4b7b7] shadow-[2px_0_6px_#a9acac]">
            <a href="#" class="flex h-11 items-center pl-2 text-[13px]"><svg class="mb-1.5 mr-1.5 h-[22px] w-[26px]"><use href="#dog"/></svg><span>Packer <b>Fuzzer</b></span></a>
            <p class="flex h-12 items-center pl-[5px]">Version 1.4 (中文 zh_CN)</p>
            <ul class="mt-3">
              <li class="mb-px flex h-8 items-center rounded bg-[#565959] pl-[13px] font-bold text-[#f4f5f5]"><svg class="mr-2 size-3.5"><use href="#file"/></svg>基础信息<svg class="ml-auto mr-1.5 size-2.5"><use href="#chev"/></svg></li>
              <li class="flex h-8 items-center pl-[25px]"><svg class="mr-2 size-3.5"><use href="#shield"/></svg><a href="#">报告摘要</a></li>
              <li class="flex h-8 items-center pl-[25px]"><svg class="mr-2 size-3.5"><use href="#db"/></svg><a href="#">Js信息</a></li>
              <li class="flex h-8 items-center pl-[25px]"><svg class="mr-2 size-3.5"><use href="#excl"/></svg><a href="#">免责声明</a></li>
              <li class="my-px flex h-8 items-center rounded bg-[#565959] pl-[13px] font-bold text-[#f4f5f5]"><svg class="mr-2 size-3.5"><use href="#bug"/></svg>漏洞详情<svg class="ml-auto mr-1.5 size-2.5"><use href="#chev"/></svg></li>
              <li class="flex h-8 items-center pl-[25px]"><svg class="mr-2 size-3.5"><use href="#key"/></svg><a href="#">敏感信息泄露漏洞</a></li>
              <li class="flex h-8 items-center pl-[13px]"><svg class="mr-2 size-3.5"><use href="#ol"/></svg><a href="#">API清单</a></li>
              <li class="mb-px flex h-8 items-center rounded bg-[#565959] pl-[13px] font-bold text-[#f4f5f5]"><svg class="mr-2 size-3.5"><use href="#plusbold"/></svg>安全建议<svg class="ml-auto mr-1.5 size-2.5"><use href="#chev"/></svg></li>
              <li class="flex h-8 items-center pl-[25px]"><svg class="mr-2 size-3.5 shrink-0"><use href="#ball"/></svg><a href="#" class="whitespace-nowrap">针对敏感信息泄露漏洞</a></li>
              <li class="flex h-8 items-center pl-[25px]"><svg class="mr-2 size-3.5"><use href="#ball"/></svg><a href="#">综合安全加固建议</a></li>
              <li class="flex h-8 items-center pl-[13px]"><svg class="mr-2 size-3.5"><use href="#disc"/></svg><a href="#">附录</a></li>
              <li class="flex h-8 items-center pl-[13px]"><svg class="mr-2 size-3.5"><use href="#print"/></svg><a href="#">打印</a></li>
            </ul>
          </nav>

          <!-- Report page -->
          <div class="flex min-w-0 flex-1 flex-col bg-[#fafbfb]">
            <header class="flex h-[43px] shrink-0 items-center bg-[#0b78ee] pl-[18px] pr-3 text-[#a9c8ea]">
              <button aria-label="菜单"><svg class="size-2.5"><use href="#lines"/></svg></button>
              <a href="#" class="ml-6">API 模糊检测报告</a>
              <div class="ml-auto flex items-center gap-6 text-[11px] text-[#7fb3ea]">
                <a href="#">Monst 主题</a>
                <a href="#">关于我们</a>
                <a href="#">反馈</a>
                <a href="#" class="ml-1">有新版? 回旋一下</a>
                <button aria-label="搜索" class="ml-5"><svg class="size-3"><use href="#magnify"/></svg></button>
              </div>
            </header>

            <div class="min-h-0 flex-1 overflow-hidden border-r border-dotted border-[#d4d6d6]">
              <section class="mt-1 border-y border-dotted border-[#a9acac] pb-4 pl-[21px] pr-5 pt-[25px]">
                <h2 class="flex items-center font-bold"><svg class="-ml-1 size-3"><use href="#excl"/></svg>免责声明</h2>
                <p class="mb-[18px] mt-3">本报告为<span class="text-[11px]">Packer Fuzzer</span>工具根据使用者检测结果<b>自动生成</b>的报告，报告内容不代表<span class="text-[11px]">Packer Fuzzer</span>开发团队的立场及观点。</p>
                <p class="mb-[18px]">由于传播、利用此工具提供的检测功能而造成的任何<b>直接或者间接的后果及损失</b>，均由使用者本人负责，本团队不为此<b>承担任何责任。</b></p>
                <p class="mb-[18px]">请在使用本工具时遵循使用者以及目标系统所在国当地的<b>相关法律法规</b>，一切<b>未授权测试均是不被允许的。</b></p>
              </section>

              <section class="border-b border-dotted border-[#a9acac] pb-4 pl-[21px] pr-5 pt-[26px]">
                <h2 class="flex items-center font-bold"><svg class="mr-0.5 size-3"><use href="#bug"/></svg>漏洞详情</h2>
                <h3 class="mt-2.5">◆ 敏感信息泄露漏洞</h3>
                <div class="mt-[7px] flex justify-end text-[11px]"><label for="s1">Search:</label><input id="s1" type="search" class="ml-1.5 w-[130px] bg-transparent outline-none" /></div>
                <table class="mt-[13px] w-full table-fixed text-left align-top">
                  <colgroup><col class="w-[65px]"><col class="w-[148px]"><col class="w-[356px]"><col><col class="w-[98px]"><col class="w-[74px]"></colgroup>
                  <thead>
                    <tr class="h-[38px] border-b border-dotted border-[#a9acac]">
                      <th class="pl-[9px] pr-1"><div class="flex items-center justify-between">ID<svg class="h-2.5 w-4"><use href="#sortup"/></svg></div></th>
                      <th class="pl-[9px] pr-1"><div class="flex items-center justify-between">敏感信息类型<svg class="h-2.5 w-4"><use href="#sort"/></svg></div></th>
                      <th class="pl-[9px] pr-1"><div class="flex items-center justify-between">关联JS地址：<svg class="h-2.5 w-4"><use href="#sort"/></svg></div></th>
                      <th class="pl-[9px] pr-1"><div class="flex items-center justify-between">泄露内容：<svg class="h-2.5 w-4"><use href="#sort"/></svg></div></th>
                      <th class="pl-[9px] pr-1"><div class="flex items-center justify-between">漏洞等级<svg class="h-2.5 w-4"><use href="#sort"/></svg></div></th>
                      <th class="pl-[9px] pr-1"><div class="flex items-center justify-end"><svg class="h-2.5 w-4"><use href="#sort"/></svg></div></th>
                    </tr>
                  </thead>
                  <tbody class="align-top text-[11px] text-[#5f6263]">
                    <tr>
                      <td class="py-[9px] pl-[9px]">1</td>
                      <td class="py-[9px] pl-[9px]">token</td>
                      <td class="whitespace-nowrap py-[9px] pl-[9px]">http://43.138.221.62:8888/assets/webpack/main.6150bec5.chunk.js</td>
                      <td class="whitespace-nowrap py-[9px] pl-[9px]">+d);switch(g[0]){case 1:n.push(d),r.push(this.lexer.yytext),o.push(this.lexer.yylloc),n.push(g[1]),d=null,p?<br>(d=p,p=null):(s=this.lexer.yyleng,a=this.lexer.yytext,u=this.lexer.yylineno,i=this.lexer.yylloc,c&gt;0&amp;&amp;c--);break;case<br>2:if(b=this.productions_[g[1]][1],w.$=r[r.length-b],w._$={first_line:o[o.length-(b||1)].first_line,last_line:o[o.length-<br>1].last_line,first_column:o[o.length-(b||1)].first_column,last_column:o[o.length-1].last_column},void 0!==<br>(m=this.performAction.call(w,a,s,u,this.yy,g[1],r,o)))return m;b&amp;&amp;<br>(n=n.slice(0,-1*b*2),r=r.slice(0,-1*b),o=o.slice(0,-1*b)),n.push(this.productions_[g[1]]<br>[0]),r.push(w.$),o.push(w._$),y=i[n[n.length-2]][n[n.length-1]],n.push(y);break;case<br>3:return!0}}return!0}},g=function(){var t={EOF:1,parseError:function(t,e){if(!this.yy.parseError)throw new<br>Error(t);this.yy.parseError(t,e)},setInput:function(t){return<br>this._input=t,this._more=this._less=this.done=!1,this.yylineno=this.yyleng=0,this.yytext=this.matched=this.match=</td>
                      <td class="py-[9px] pl-[9px] text-xs leading-[18px]">中危</td>
                      <td class="py-[9px] pl-[9px]"><button class="h-7 w-[45px] bg-[#0b78ee] text-[#cfe2f7]">More</button></td>
                    </tr>
                  </tbody>
                </table>
                <div class="mt-1.5 flex h-[29px] items-center justify-between text-[11px] text-[#8b8f8f]">
                  <p class="pt-2 text-[#6b6f70]">Showing 1 to 1 of 1 entries</p>
                  <div class="flex items-center gap-[9px] pr-2.5">
                    <button>Previous</button><button class="h-[29px] w-[26px] bg-[#0b78ee] text-white">1</button><button>Next</button>
                  </div>
                </div>
              </section>

              <section class="pl-[21px] pr-5 pt-[26px]">
                <h2 class="flex items-center font-bold"><svg class="mr-0.5 size-3"><use href="#ol"/></svg>API清单</h2>
                <div class="mt-[14px] flex justify-end text-[11px]"><label for="s2">Search:</label><input id="s2" type="search" class="ml-1.5 w-[130px] bg-transparent outline-none" /></div>
                <table class="mt-[13px] w-full table-fixed text-left">
                  <colgroup><col class="w-[79px]"><col class="w-[213px]"><col><col class="w-[93px]"><col class="w-[172px]"><col class="w-[81px]"></colgroup>
                  <thead>
                    <tr class="h-[38px] border-b border-dotted border-[#a9acac]">
                      <th class="pl-[9px] pr-1"><div class="flex items-center justify-between">ID<svg class="h-2.5 w-4"><use href="#sortup"/></svg></div></th>
                      <th class="pl-[9px] pr-1"><div class="flex items-center justify-between">API名称<svg class="h-2.5 w-4"><use href="#sort"/></svg></div></th>
                      <th class="pl-[9px] pr-1"><div class="flex items-center justify-between">API地址<svg class="h-2.5 w-4"><use href="#sort"/></svg></div></th>
                      <th class="pl-[9px] pr-1"><div class="flex items-center justify-between">长度<svg class="h-2.5 w-4"><use href="#sort"/></svg></div></th>
                      <th class="pl-[9px] pr-1"><div class="flex items-center justify-between">请求类型<svg class="h-2.5 w-4"><use href="#sort"/></svg></div></th>
                      <th class="pl-[9px] pr-1"><div class="flex items-center justify-end"><svg class="h-2.5 w-4"><use href="#sort"/></svg></div></th>
                    </tr>
                  </thead>
                  <tbody><tr><td colspan="6" class="py-[9px] text-center text-[11px] text-[#5f6263]">No data available in table</td></tr></tbody>
                </table>
                <div class="mt-1.5 flex h-[29px] items-center justify-between text-[11px] text-[#8b8f8f]">
                  <p class="pt-2 text-[#6b6f70]">Showing 0 to 0 of 0 entries</p>
                  <div class="flex gap-[18px] pr-2.5"><button>Previous</button><button>Next</button></div>
                </div>
              </section>
            </div>
          </div>

          <!-- Page scrollbar -->
          <div class="flex w-[13px] shrink-0 flex-col items-end bg-[#fafbfb]">
            <svg class="mr-0.5 mt-1 h-1 w-2" viewBox="0 0 8 4"><path d="M0 4l4-4 4 4z" fill="#6b6f70"/></svg>
            <div class="mt-[260px] h-[251px] w-[11px] bg-[#b4b7b7]"></div>
          </div>
        </div>
      </section>

      <!-- Screen frame corners -->
      <div class="pointer-events-none absolute left-0 top-0 h-[90px] w-[90px] border-l-4 border-t-4 border-[#1b62b5]"></div>
      <div class="pointer-events-none absolute right-0 top-0 h-[90px] w-[90px] border-r-4 border-t-4 border-[#1b62b5]"></div>
    </main>

    <!-- Taskbar -->
    <footer class="relative flex h-9 shrink-0 items-center bg-[#2c2e2f] pl-[770px] pr-3 text-[#e4e5e5]">
      <div class="flex gap-[15px] *:size-[18px]">
        <svg><use href="#winlogo"/></svg>
        <svg><use href="#explorer"/></svg>
        <svg><use href="#edge"/></svg>
        <svg><use href="#chrome"/></svg>
        <svg><use href="#tdoc"/></svg>
        <span class="text-center leading-7">.</span>
        <svg><use href="#wave"/></svg>
        <svg><use href="#chrome"/></svg>
        <svg><use href="#note"/></svg>
        <svg><use href="#term"/></svg>
        <svg><use href="#paper"/></svg>
        <svg><use href="#tapp"/></svg>
      </div>
      <div class="absolute bottom-1 left-[809px] grid grid-cols-[repeat(11,33px)]">
        <i class="h-0.5 w-1.5 bg-[#a9acac]"></i><i class="h-0.5 w-1.5 bg-[#a9acac]"></i><i class="h-0.5 w-2.5 bg-[#a9acac]"></i><i class="h-0.5 w-1.5 bg-[#a9acac]"></i><i></i><i class="h-0.5 w-1.5 bg-[#a9acac]"></i><i class="h-0.5 w-1.5 bg-[#a9acac]"></i><i class="h-0.5 w-1.5 bg-[#a9acac]"></i><i class="h-0.5 w-1.5 bg-[#a9acac]"></i><i class="h-0.5 w-1.5 bg-[#a9acac]"></i><i class="h-0.5 w-1.5 bg-[#a9acac]"></i>
      </div>
      <div class="ml-auto flex items-center gap-1.5">
        <svg class="size-3"><use href="#wave"/></svg>
        <svg class="size-3 text-[#7fb3ea]"><use href="#shield"/></svg>
        <svg class="size-3 text-[#b4b7b7]"><use href="#disc"/></svg>
        <svg class="size-3"><use href="#tdoc"/></svg>
        <svg class="size-3"><use href="#zig"/></svg>
        <svg class="ml-[18px] size-3"><use href="#mon"/></svg>
        <svg class="size-3"><use href="#people"/></svg>
        <svg class="size-3"><use href="#copy"/></svg>
        <svg class="size-3"><use href="#win"/></svg>
        <svg class="size-3"><use href="#usb"/></svg>
        <svg class="ml-1 size-3"><use href="#mic"/></svg>
        <span class="ml-1 text-[11px]">英</span>
        <svg class="ml-2 size-3"><use href="#net"/></svg>
        <svg class="ml-1 size-3"><use href="#spk"/></svg>
        <time class="ml-1 pt-1 text-right text-[9px] leading-3">21:34<br>2023-03-19</time>
        <svg class="size-3"><use href="#moon"/></svg>
      </div>
      <div class="pointer-events-none absolute bottom-0 left-0 h-[90px] w-[90px] border-b-4 border-l-4 border-[#1b62b5]"></div>
      <div class="pointer-events-none absolute bottom-0 right-0 h-[90px] w-[90px] border-b-4 border-r-4 border-[#1b62b5]"></div>
      <p class="pointer-events-none absolute bottom-8 right-7 whitespace-nowrap text-[25px] leading-6 text-[#e4e5e5] [text-shadow:1px_1px_1px_#2c2e2f,-1px_-1px_1px_#6b6f70]">掘金技术社区 @ 布客飞龙</p>
    </footer>
  </div>

  <script>
    const tabs = [
      ["tile", "登录"], ["globe", "小迪渗透"], ["", "Assetno"], ["globe", "https://"],
      ["clock", "360网络"], ["tile", "搜索结果"], ["globe", "TAROS"], ["spark", "账款管家"],
      ["clock", "360网络"], ["eagle", "鹰图平台"], ["orb", "图形后台"], ["ring", "登录 - 火"],
      ["zig", "用户登录"], ["tick3", "寻路犬员"], ["paw", "WEBPA:"], ["globe", "Packer F"]
    ];

    document.getElementById("tabs").innerHTML = tabs.map(([icon, name]) => `
      <div class="flex min-w-0 items-center">
        <svg class="ml-0.5 mr-1.5 size-3 shrink-0">${icon ? `<use href="#${icon}"/>` : ""}</svg>
        <span class="w-[42px] whitespace-nowrap">${name}</span>
        <button aria-label="关闭 ${name}" class="ml-0.5"><svg class="size-2.5"><use href="#x"/></svg></button>
      </div>`).join("");
  </script>
</body>
</html>
